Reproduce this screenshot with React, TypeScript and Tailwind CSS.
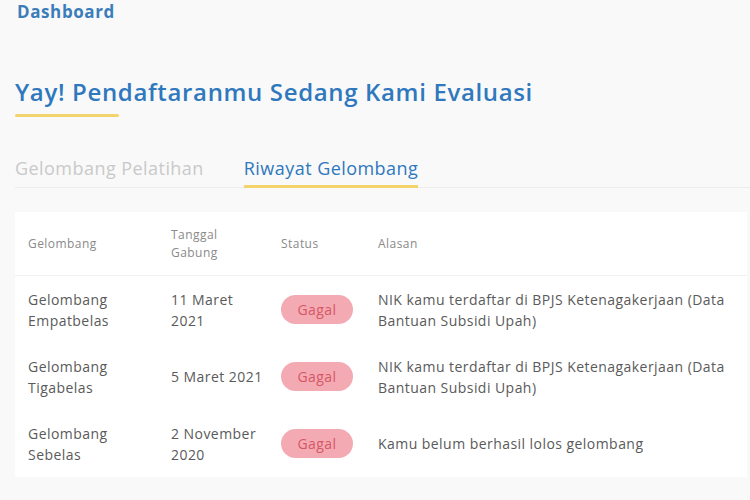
const rows = [
  {
    name: ["Gelombang", "Empatbelas"],
    date: ["11 Maret", "2021"],
    reason: ["NIK kamu terdaftar di BPJS Ketenagakerjaan (Data", "Bantuan Subsidi Upah)"],
  },
  {
    name: ["Gelombang", "Tigabelas"],
    date: ["5 Maret 2021"],
    reason: ["NIK kamu terdaftar di BPJS Ketenagakerjaan (Data", "Bantuan Subsidi Upah)"],
  },
  {
    name: ["Gelombang", "Sebelas"],
    date: ["2 November", "2020"],
    reason: ["Kamu belum berhasil lolos gelombang"],
  },
];

function Lines({ lines }: { lines: string[] }) {
  return (
    <div>
      {lines.map((l) => (
        <div key={l}>{l}</div>
      ))}
    </div>
  );
}

export default function App() {
  return (
    <div className="w-[750px] h-[500px] overflow-hidden bg-[#f9f9f9] font-['Open_Sans',sans-serif]">
      <div className="px-[17px] pt-[1px] text-[17px] font-bold tracking-[0.6px] text-[#3b7dbb] leading-[22px]">
        Dashboard
      </div>

      <div className="mt-[53px] pl-[15px]">
        <h1 className="text-[24px] font-semibold tracking-[0.65px] text-[#2f78bd] leading-[32px]">
          Yay! Pendaftaranmu Sedang Kami Evaluasi
        </h1>
        <div className="mt-[6px] h-[3px] w-[104px] bg-[#f3d36c] rounded-full" />
      </div>

      <div className="mt-[38px] ml-[15px] flex border-b border-[#ececec] text-[18px] tracking-[0.45px] leading-[26px]">
        <div className="pb-[6px] text-[#c9c9c9]">Gelombang Pelatihan</div>
        <div className="ml-[40px] pb-[3px] border-b-[3px] border-[#f3d36c] text-[#2f78bd] -mb-px">
          Riwayat Gelombang
        </div>
      </div>

      <div className="mt-[24px] ml-[15px] w-[732px] bg-white text-[14px] tracking-[0.45px] leading-[21px]">
        <div className="grid grid-cols-[143px_110px_97px_1fr] items-center px-[13px] h-[64px] border-b border-[#f0f0f0] text-[12px] leading-[18px] text-[#8a8a8a]">
          <div>Gelombang</div>
          <div>
            <div>Tanggal</div>
            <div>Gabung</div>
          </div>
          <div>Status</div>
          <div>Alasan</div>
        </div>
        {rows.map((r, i) => (
          <div
            key={i}
            className="grid grid-cols-[143px_110px_97px_1fr] items-center px-[13px] h-[67px] text-[#5a5a5a]"
          >
            <Lines lines={r.name} />
            <Lines lines={r.date} />
            <div>
              <span className="inline-flex items-center justify-center w-[72px] h-[29px] rounded-full bg-[#f4aab3] text-[#d55866]">
                Gagal
              </span>
            </div>
            <Lines lines={r.reason} />
          </div>
        ))}
      </div>
    </div>
  );
}
